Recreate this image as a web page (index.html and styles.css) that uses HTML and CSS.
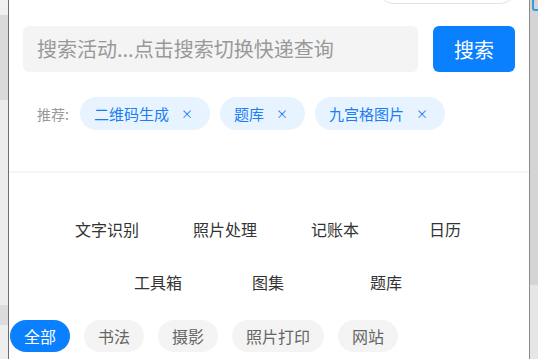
FILE: index.html
```html
<!DOCTYPE html>
<html lang="zh-CN">
<head>
    <meta charset="UTF-8">
    <meta name="viewport" content="width=device-width, initial-scale=1.0">
    <title>搜索</title>
    <link rel="stylesheet" href="styles.css">
</head>
<body>
    <div class="side-left"></div>
    <div class="panel">
        <div class="top-pill"></div>
        <div class="search-row">
            <div class="search-input">搜索活动...点击搜索切换快递查询</div>
            <button class="search-btn">搜索</button>
        </div>
        <div class="recommend">
            <span class="recommend-label">推荐:</span>
            <span class="tag">二维码生成<span class="tag-close">×</span></span>
            <span class="tag">题库<span class="tag-close">×</span></span>
            <span class="tag">九宫格图片<span class="tag-close">×</span></span>
        </div>
        <div class="divider"></div>
        <div class="tools">
            <div class="tool">文字识别</div>
            <div class="tool">照片处理</div>
            <div class="tool">记账本</div>
            <div class="tool">日历</div>
            <div class="tool">工具箱</div>
            <div class="tool">图集</div>
            <div class="tool">题库</div>
        </div>
        <div class="categories">
            <span class="cat active">全部</span>
            <span class="cat">书法</span>
            <span class="cat">摄影</span>
            <span class="cat">照片打印</span>
            <span class="cat">网站</span>
        </div>
    </div>
    <div class="side-right">
        <div class="side-icon"></div>
    </div>
</body>
</html>
```
FILE: styles.css
```css
body {
    margin: 0;
    height: 359px;
    overflow: hidden;
    display: flex;
    font-family: "Noto Sans CJK SC", "Noto Sans", sans-serif;
    background-color: #e8e8e8;
}
.side-left {
    flex-shrink: 0;
    width: 8px;
    background: linear-gradient(to bottom, #f0f0f0 0, #f0f0f0 15px, #dadada 15px, #dadada 100px, #ececec 100px, #ececec 305px, #dcdcdc 305px, #dcdcdc 325px, #eeeeee 325px);
}
.panel {
    flex-shrink: 0;
    width: 522px;
    box-sizing: border-box;
    border-left: 1px solid #6e6e6e;
    border-right: 1px solid #8a8a8a;
    background-color: white;
}
.top-pill {
    width: 140px;
    height: 34px;
    box-sizing: border-box;
    margin: -30px 12px 0 auto;
    border: 1px solid #e2e2e2;
    border-radius: 17px;
}
.search-row {
    display: flex;
    gap: 15px;
    margin-top: 22px;
    padding: 0 14px;
}
.search-input {
    width: 395px;
    height: 46px;
    box-sizing: border-box;
    padding-left: 14px;
    background-color: #f4f4f4;
    border-radius: 6px;
    color: #999;
    font-size: 20px;
    line-height: 46px;
}
.search-btn {
    width: 82px;
    height: 46px;
    border: none;
    border-radius: 6px;
    background-color: #0a80ff;
    color: white;
    font-family: inherit;
    font-size: 20px;
    padding: 0;
}
.recommend {
    display: flex;
    align-items: center;
    gap: 10px;
    margin-top: 25px;
    padding-left: 28px;
}
.recommend-label {
    color: #999;
    font-size: 14px;
    margin-right: 1px;
}
.tag {
    display: flex;
    align-items: center;
    height: 33px;
    padding: 0 17px 0 14px;
    border-radius: 17px;
    background-color: #e7f3ff;
    color: #1a7df2;
    font-size: 15px;
}
.tag-close {
    margin-left: 12px;
    font-size: 12px;
}
.divider {
    height: 2px;
    margin-top: 41px;
    background-color: #f5f5f5;
}
.tools {
    display: flex;
    flex-wrap: wrap;
    justify-content: center;
    row-gap: 29px;
    width: 472px;
    margin: 44px auto 0;
}
.tool {
    width: 118px;
    box-sizing: border-box;
    padding-left: 42px;
    height: 24px;
    line-height: 24px;
    font-size: 16px;
    color: #333;
}
.categories {
    display: flex;
    gap: 14px;
    margin-top: 26px;
    padding-left: 1px;
}
.cat {
    height: 32px;
    line-height: 32px;
    padding: 0 14px;
    border-radius: 16px;
    background-color: #f4f4f4;
    color: #666;
    font-size: 16px;
}
.cat.active {
    background-color: #0a80ff;
    color: white;
}
.side-right {
    flex: 1;
    min-width: 0;
    overflow: hidden;
    background: linear-gradient(to bottom, #d4d4d4 0, #d4d4d4 285px, #e6e6e6 285px);
}
.side-icon {
    width: 10px;
    height: 9px;
    margin-left: 2px;
    margin-top: -2px;
    border: 2px solid #3a9ad9;
    border-radius: 3px;
}
```
